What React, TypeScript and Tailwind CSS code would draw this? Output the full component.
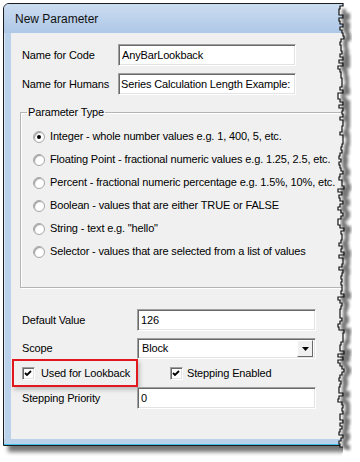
import React from 'react';

const sunken =
  'bg-white border border-t-[#a0a0a0] border-l-[#a0a0a0] border-b-white border-r-white shadow-[inset_1px_1px_0_#696969,inset_-1px_-1px_0_#e3e3e3]';

const types = [
  'Integer - whole number values e.g. 1, 400, 5, etc.',
  'Floating Point - fractional numeric values e.g. 1.25, 2.5, etc.',
  'Percent - fractional numeric percentage e.g. 1.5%, 10%, etc.',
  'Boolean - values that are either TRUE or FALSE',
  'String - text e.g. "hello"',
  'Selector - values that are selected from a list of values',
];

// jagged "torn paper" edge on the right
const tearPts = (() => {
  const pts: [number, number][] = [];
  let s = 11;
  const rnd = () => {
    s = (s * 9301 + 49297) % 233280;
    return s / 233280;
  };
  for (let y = 0; y <= 465; y += 3) pts.push([338 + Math.round(rnd() * 6), y]);
  return pts;
})();

const stepPath = (from: number, to: number, dx = 0, dy = 0) => {
  const p = tearPts.filter(([, y]) => y >= from && y <= to);
  let d = `M ${p[0][0] + dx} ${p[0][1] + dy}`;
  for (let i = 1; i < p.length; i++) {
    d += ` V ${p[i][1] + dy} H ${p[i][0] + dx}`;
  }
  return d;
};

const Radio: React.FC<{ checked?: boolean }> = ({ checked }) => (
  <div className="w-[12px] h-[12px] rounded-full bg-white border border-[#a7a7a7] shadow-[inset_1px_1px_1px_#9a9a9a] flex items-center justify-center shrink-0">
    {checked && <div className="w-[4px] h-[4px] rounded-full bg-black" />}
  </div>
);

const Check: React.FC = () => (
  <div className={`w-[13px] h-[13px] shrink-0 flex items-center justify-center ${sunken}`}>
    <svg width="9" height="9" viewBox="0 0 9 9">
      <path d="M1 4 L3 6 L7 2" stroke="#000" strokeWidth="1.8" fill="none" />
    </svg>
  </div>
);

export default function App() {
  const cover = stepPath(0, 465) + ' L 360 465 L 360 0 Z';
  return (
    <div className="relative w-[360px] h-[462px] bg-white overflow-hidden font-['Liberation_Sans',Arial,sans-serif] text-[11px] tracking-[-0.15px] text-black">
      <div className="ml-[3px] mt-[3px] w-[356px] h-[443px] border border-[#1c1c1c] rounded-tl-[6px] rounded-tr-[6px] bg-[#b9d1ea] shadow-[5px_6px_4px_rgba(0,0,0,0.55)] flex flex-col overflow-hidden">
        <div className="h-[29px] shrink-0 bg-gradient-to-b from-[#cbdcf0] to-[#aec8e7] pl-[11px] flex items-center text-[12px] tracking-normal text-[#111]">
          New Parameter
        </div>
        <div className="flex-1 flex pl-[7px] shadow-[inset_1px_0_0_#dbe7f5]">
          <div className="flex-1 bg-[#f0f0f0] pt-[11px] flex flex-col whitespace-nowrap">
            <div className="flex items-center h-[22px] pl-[11px]">
              <span className="w-[96px]">Name for Code</span>
              <div className={`w-[178px] h-[22px] flex items-center pl-[3px] ${sunken}`}>AnyBarLookback</div>
            </div>
            <div className="flex items-center h-[22px] pl-[11px] mt-[7px]">
              <span className="w-[96px]">Name for Humans</span>
              <div className={`w-[178px] h-[22px] flex items-center pl-[2px] ${sunken}`}>
                Series Calculation Length Example:
              </div>
            </div>

            <fieldset className="ml-[9px] mt-[10px] w-[335px] border border-[#b4b4b4] px-[6px] pb-[24px] shadow-[inset_1px_1px_0_#fff,1px_1px_0_#fff]">
              <legend className="px-[1px] leading-[14px]">Parameter Type</legend>
              <div className="pt-[6px] flex flex-col">
                {types.map((t, i) => (
                  <div key={t} className="h-[23px] flex items-center ml-[6px] gap-[5px]">
                    <Radio checked={i === 0} />
                    <span>{t}</span>
                  </div>
                ))}
              </div>
            </fieldset>

            <div className="flex items-center h-[22px] pl-[11px] mt-[21px]">
              <span className="w-[115px]">Default Value</span>
              <div className={`w-[179px] h-[22px] flex items-center pl-[3px] ${sunken}`}>126</div>
            </div>
            <div className="flex items-center h-[21px] pl-[11px] mt-[7px]">
              <span className="w-[115px]">Scope</span>
              <div className={`w-[179px] h-[21px] flex items-center justify-between pl-[4px] pr-[2px] ${sunken}`}>
                <span>Block</span>
                <div className="w-[16px] h-[17px] bg-[#f0f0f0] border border-t-white border-l-white border-b-[#696969] border-r-[#696969] flex items-center justify-center">
                  <svg width="7" height="4" viewBox="0 0 7 4">
                    <path d="M0 0 H7 L3.5 4 Z" fill="#000" />
                  </svg>
                </div>
              </div>
            </div>
            <div className="flex items-center h-[28px]">
              <div className="ml-[1px] w-[126px] h-[28px] border-2 border-[#e3171e] shadow-[2px_3px_4px_rgba(0,0,0,0.2)] flex items-center pl-[8px] gap-[6px]">
                <Check />
                <span>Used for Lookback</span>
              </div>
              <div className="ml-[32px] flex items-center gap-[4px]">
                <Check />
                <span>Stepping Enabled</span>
              </div>
            </div>
            <div className="flex items-center h-[22px] pl-[11px]">
              <span className="w-[115px]">Stepping Priority</span>
              <div className={`w-[179px] h-[22px] flex items-center pl-[3px] ${sunken}`}>0</div>
            </div>
          </div>
        </div>
        <div className="h-[5px] shrink-0" />
        <div className="h-[1px] shrink-0 bg-[#3cc2ea]" />
      </div>

      <svg className="absolute inset-0 pointer-events-none" width="360" height="462" viewBox="0 0 360 462">
        <defs>
          <filter id="blur" x="-50%" y="-5%" width="200%" height="110%">
            <feGaussianBlur stdDeviation="1.6" />
          </filter>
        </defs>
        <path d={cover} fill="#fff" />
        <path d={stepPath(9, 450, 5, 0)} stroke="#555" strokeWidth="4" fill="none" opacity="0.8" filter="url(#blur)" />
        <path d={stepPath(3, 447)} stroke="#111" strokeWidth="1.2" fill="none" />
      </svg>
    </div>
  );
}
